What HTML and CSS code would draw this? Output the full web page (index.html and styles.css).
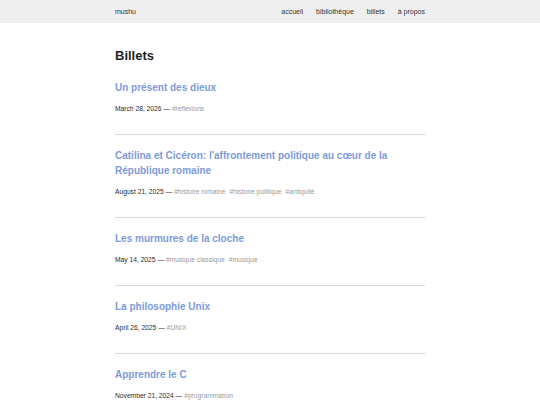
FILE: index.html
```html
<!DOCTYPE html>
<html lang="fr">
<head>
<meta charset="utf-8">
<title>Billets — mushu</title>
<link rel="stylesheet" href="styles.css">
</head>
<body>
<header class="site-header">
  <div class="wrap header-inner">
    <a class="brand" href="#">mushu</a>
    <nav class="nav">
      <a href="#">accueil</a>
      <a href="#">bibliothèque</a>
      <a href="#">billets</a>
      <a href="#">à propos</a>
    </nav>
  </div>
</header>
<main class="wrap main">
  <h1 class="page-title">Billets</h1>
  <article class="post">
    <h2 class="post-title"><a href="#">Un présent des dieux</a></h2>
    <p class="post-meta">March 28, 2026 — <span class="tag">#reflexions</span></p>
  </article>
  <article class="post">
    <h2 class="post-title"><a href="#">Catilina et Cicéron: l'affrontement politique au cœur de la République romaine</a></h2>
    <p class="post-meta">August 21, 2025 — <span class="tag">#histoire romaine</span><span class="tag">#histoire politique</span><span class="tag">#antiquité</span></p>
  </article>
  <article class="post">
    <h2 class="post-title"><a href="#">Les murmures de la cloche</a></h2>
    <p class="post-meta">May 14, 2025 — <span class="tag">#musique classique</span><span class="tag">#musique</span></p>
  </article>
  <article class="post">
    <h2 class="post-title"><a href="#">La philosophie Unix</a></h2>
    <p class="post-meta">April 26, 2025 — <span class="tag">#UNIX</span></p>
  </article>
  <article class="post">
    <h2 class="post-title"><a href="#">Apprendre le C</a></h2>
    <p class="post-meta">November 21, 2024 — <span class="tag">#programmation</span></p>
  </article>
</main>
</body>
</html>
```

FILE: styles.css
```css
html, body {
  margin: 0;
  padding: 0;
  background: #ffffff;
  font-family: "Liberation Sans", Arial, sans-serif;
  color: #222222;
}

a {
  text-decoration: none;
  color: inherit;
}

.wrap {
  width: 310px;
  margin: 0 auto;
}

.site-header {
  background: #efefef;
  height: 23px;
}

.header-inner {
  display: flex;
  justify-content: space-between;
  align-items: center;
  height: 23px;
  font-size: 7px;
  color: #333333;
}

.nav {
  display: flex;
  gap: 13px;
}

.main {
  padding-top: 25px;
}

.page-title {
  margin: 0 0 3px;
  font-size: 13px;
  line-height: 16px;
  font-weight: bold;
  color: #1f1f1f;
}

.post {
  padding: 13px 0 20px;
  border-bottom: 1px solid #dadada;
}

.post:last-child {
  border-bottom: none;
}

.post-title {
  margin: 0;
  font-size: 10px;
  line-height: 15px;
  font-weight: bold;
  color: #7d9bd8;
}

.post-meta {
  margin: 9px 0 0;
  font-size: 6.7px;
  line-height: 10px;
  color: #2a2a2a;
}

.tag {
  color: #9a9a9a;
  margin-right: 4px;
}
```
